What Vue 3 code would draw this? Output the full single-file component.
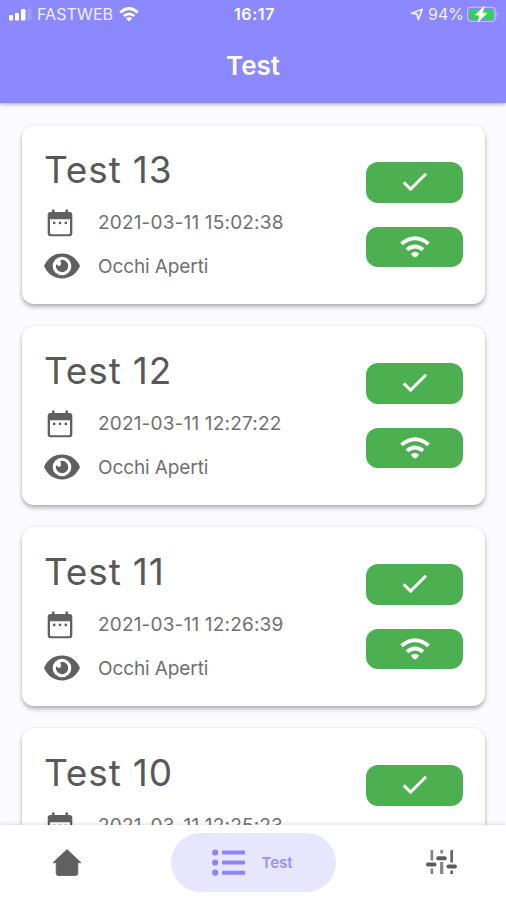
<script setup>
const tests = [
  { id: 13, date: '2021-03-11 15:02:38', state: 'Occhi Aperti' },
  { id: 12, date: '2021-03-11 12:27:22', state: 'Occhi Aperti' },
  { id: 11, date: '2021-03-11 12:26:39', state: 'Occhi Aperti' },
  { id: 10, date: '2021-03-11 12:25:23', state: 'Occhi Aperti' },
]
</script>

<template>
  <div class="screen">
    <header class="header">
      <div class="status">
        <div class="side">
          <svg class="signal" width="23" height="14" viewBox="0 0 23 14" fill="#fff">
            <rect x="0" y="8" width="4" height="5.500" rx="1" />
            <rect x="6" y="6" width="4" height="7.500" rx="1" />
            <rect x="12" y="2" width="4.500" height="11.500" rx="1" />
            <rect x="18.500" y="0" width="4" height="13.500" rx="1" opacity=".15" />
          </svg>
          <span class="carrier">FASTWEB</span>
          <svg class="wifi-status" width="20" height="15" viewBox="0 0 20 15">
            <g fill="none" stroke="#fff" stroke-width="2.700">
              <path d="M1.200 5.400Q10 -2.400 18.800 5.400" />
              <path d="M4.700 9Q10 4.600 15.300 9" />
            </g>
            <path d="M6.900 11.200Q10 8.900 13.100 11.200L10 14.400Z" fill="#fff" />
          </svg>
        </div>
        <span class="clock">16:17</span>
        <div class="side right">
          <svg class="location" width="14" height="13" viewBox="0 0 14 13">
            <path d="M12.300 1.200L1.600 5.200L7 6.200L8.300 11.600Z" fill="none" stroke="#f0efff" stroke-width="1.700" stroke-linejoin="round" />
          </svg>
          <span class="percent">94%</span>
          <svg class="battery" width="33" height="17" viewBox="0 0 33 17">
            <rect x=".6" y="1.200" width="27.500" height="14.300" rx="3.500" fill="none" stroke="#c9c6ff" stroke-width="1.100" />
            <rect x="2.500" y="3" width="23.700" height="10.700" rx="2" fill="#32cf5b" />
            <path d="M29.700 5.600Q32.300 8.300 29.700 11Z" fill="#c9c6ff" />
            <path d="M17 .3L8.600 9H13L11 16L20 7.200H15.500Z" fill="#fff" stroke="#fff" stroke-width=".8" stroke-linejoin="round" />
          </svg>
        </div>
      </div>
      <h1 class="heading">Test</h1>
    </header>

    <main class="list">
      <article v-for="t in tests" :key="t.id" class="card">
        <div class="info">
          <h2 class="title">Test {{ t.id }}</h2>
          <div class="row">
            <span class="icon calendar">
              <svg width="26" height="28" viewBox="0 0 26 28" fill="#606060">
                <path fill-rule="evenodd" d="M5 .5H7.500V3H18.500V.5H21V3H22.500Q25.300 3 25.300 5.800V24.500Q25.300 27.300 22.500 27.300H3.500Q.7 27.300 .7 24.500V5.800Q.7 3 3.500 3H5ZM3 10.200V24Q3 25.300 4.300 25.300H21.700Q23 25.300 23 24V10.200Z" />
                <rect x="6" y="12.700" width="2.400" height="2.400" />
                <rect x="11.800" y="12.700" width="2.400" height="2.400" />
                <rect x="17.600" y="12.700" width="2.400" height="2.400" />
              </svg>
            </span>
            <span class="text">{{ t.date }}</span>
          </div>
          <div class="row">
            <span class="icon">
              <svg width="36" height="26" viewBox="0 0 36 26">
                <path d="M0 13C3.500 5 10 .6 18 .6S32.500 5 36 13C32.500 21 26 25.400 18 25.400S3.500 21 0 13Z" fill="#606060" />
                <circle cx="18" cy="13" r="9.300" fill="#fff" />
                <path d="M18.200 6.800A6.200 6.200 0 1 1 11.800 13Q12.100 11.500 12.800 11.200Q14.200 14 16.500 12.300Q18.200 10.400 16.300 8.300Q16.500 7.200 18.200 6.800Z" fill="#606060" />
              </svg>
            </span>
            <span class="text state">{{ t.state }}</span>
          </div>
        </div>
        <div class="badges">
          <span class="badge">
            <svg width="26" height="20" viewBox="0 0 26 20">
              <path d="M1.700 10.400L8.600 17.100L24 1.700" fill="none" stroke="#fff" stroke-width="2.900" />
            </svg>
          </span>
          <span class="badge">
            <svg width="30" height="22" viewBox="0 0 30 22">
              <g fill="none" stroke="#fff" stroke-width="3.900">
                <path d="M1.500 7.800Q15 -3.200 28.500 7.800" />
                <path d="M7 13.700Q15 7.200 23 13.700" />
              </g>
              <path d="M11 17.600Q15 14 19 17.600Q18.500 20 15 21.500Q11.500 20 11 17.600Z" fill="#fff" />
            </svg>
          </span>
        </div>
      </article>
    </main>

    <nav class="nav">
      <a class="tab">
        <svg width="30" height="28" viewBox="0 0 30 28">
          <path d="M15 .5L29 13.700H25.800V24.500Q25.800 26.500 23.800 26.500H6.200Q4.200 26.500 4.200 24.500V13.700H1Z" fill="#606060" stroke="#606060" stroke-width=".8" stroke-linejoin="round" />
        </svg>
      </a>
      <a class="tab active">
        <svg width="33" height="28" viewBox="0 0 33 28" fill="#8c84fb">
          <circle cx="3.200" cy="3.500" r="3.100" />
          <circle cx="3.200" cy="13.500" r="3.100" />
          <circle cx="3.200" cy="23.700" r="3.100" />
          <rect x="10" y="1.500" width="23" height="4" rx="1" />
          <rect x="10" y="11.500" width="23" height="4" rx="1" />
          <rect x="10" y="21.700" width="23" height="4" rx="1" />
        </svg>
        <span class="label">Test</span>
      </a>
      <a class="tab">
        <svg width="32" height="26" viewBox="0 0 32 26">
          <g fill="#858585">
            <rect x="4.500" y="0" width="2.700" height="10.500" />
            <rect x="4.500" y="18.500" width="2.700" height="5.500" />
            <rect x="14.300" y="0" width="2.700" height="3.500" />
            <rect x="14.100" y="12" width="3.200" height="12" />
          </g>
          <g fill="#5b5b5b">
            <rect x="24.400" y="0" width="2.500" height="12.500" />
            <rect x="24.400" y="20.500" width="2.500" height="3.500" />
            <rect x="0" y="12.500" width="10.500" height="4" rx="2" />
            <rect x="10.200" y="6.200" width="10.500" height="4" rx="2" />
            <rect x="20.500" y="14.500" width="10.500" height="4" rx="2" />
          </g>
        </svg>
      </a>
    </nav>
  </div>
</template>

<style>
body {
  margin: 0;
}
</style>

<style scoped>
.screen {
  width: 506px;
  height: 900px;
  display: flex;
  flex-direction: column;
  overflow: hidden;
  background: #fbfaff;
  font-family: Inter, "Liberation Sans", sans-serif;
  color: #606060;
}
.header {
  flex: none;
  height: 103px;
  background: #8c88ff;
  color: #fff;
  box-shadow: 0 1px 4px rgba(0, 0, 0, 0.35);
  z-index: 1;
}
.status {
  display: grid;
  grid-template-columns: 1fr auto 1fr;
  align-items: center;
  height: 28px;
  padding: 0 6px 0 9px;
}
.side {
  display: flex;
  align-items: center;
}
.right {
  justify-content: flex-end;
}
.carrier {
  margin-left: 5px;
  font-size: 16px;
  letter-spacing: 0.1px;
  color: #f0efff;
}
.wifi-status {
  margin-left: 6px;
}
.clock {
  font-size: 16px;
  font-weight: 600;
  letter-spacing: 0.6px;
}
.percent {
  margin: 0 3px 0 4px;
  font-size: 16px;
  color: #f0efff;
}
.heading {
  margin: 20px 0 0;
  text-align: center;
  font-size: 26px;
  line-height: 36px;
  font-weight: 600;
}
.list {
  flex: 1;
  min-height: 0;
  overflow: hidden;
  display: flex;
  flex-direction: column;
  gap: 22px;
  padding: 22px 21px 0 22px;
}
.card {
  flex: none;
  box-sizing: border-box;
  height: 179px;
  display: flex;
  justify-content: space-between;
  padding: 21px 22px 0 22px;
  background: #fff;
  border-radius: 12px;
  box-shadow: 0 3px 4px rgba(0, 0, 0, 0.28), 0 0 3px rgba(0, 0, 0, 0.08);
}
.title {
  margin: 0 0 9px;
  font-size: 37px;
  line-height: 48px;
  font-weight: 400;
  letter-spacing: 0.85px;
  color: #585858;
}
.row {
  display: flex;
  align-items: center;
  height: 43px;
}
.row:first-of-type {
  margin-top: -2px;
}
.icon {
  width: 36px;
  margin-right: 18px;
  display: flex;
  justify-content: center;
}
.calendar {
  box-sizing: border-box;
  padding-right: 4px;
}
.text {
  font-size: 19px;
  letter-spacing: 0.18px;
  color: #707070;
  white-space: nowrap;
}
.state {
  padding-top: 1px;
  letter-spacing: -0.1px;
}
.badges {
  display: flex;
  flex-direction: column;
  gap: 24px;
  padding-top: 16px;
}
.badge {
  width: 97px;
  height: 40.5px;
  display: flex;
  align-items: center;
  justify-content: center;
  border-radius: 12px;
  background: #4caf50;
}
.nav {
  flex: none;
  box-sizing: border-box;
  height: 75px;
  display: flex;
  justify-content: space-between;
  padding: 8px 48px 0 52px;
  background: #fff;
  box-shadow: 0 -1px 4px rgba(0, 0, 0, 0.12);
  z-index: 1;
}
.tab {
  height: 59px;
  display: flex;
  align-items: center;
}
.active {
  box-sizing: border-box;
  width: 165px;
  margin-right: 2px;
  padding-left: 41px;
  border-radius: 30px;
  background: #e8e6ff;
}
.label {
  margin-left: 17px;
  font-size: 15px;
  font-weight: 600;
  color: #9a92f7;
}
</style>
